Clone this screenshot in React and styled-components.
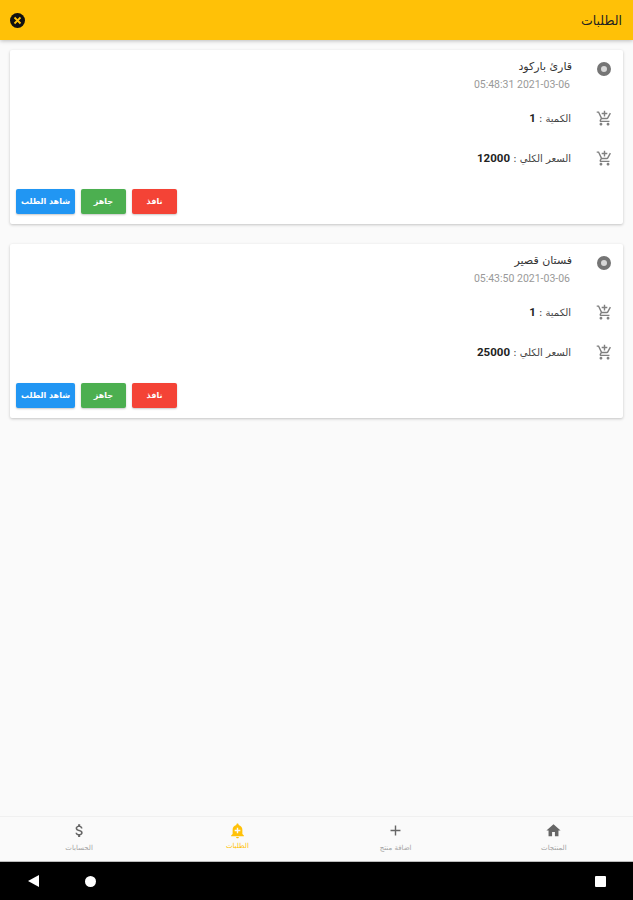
import React from "react";
import styled, { createGlobalStyle } from "styled-components";
import { MdHome, MdAdd, MdAttachMoney, MdAddAlert, MdOutlineAddShoppingCart } from "react-icons/md";

const Global = createGlobalStyle`
  html, body { margin: 0; padding: 0; background: #fafafa; }
  body { font-family: "DejaVu Sans", "Roboto", sans-serif; }
`;

const Screen = styled.div`
  width: 633px; height: 900px; display: flex; flex-direction: column; background: #fafafa; overflow: hidden;
`;
const AppBar = styled.header`
  height: 40px; flex: none; background: #ffc107; display: flex; align-items: center; justify-content: space-between;
  padding: 0 11px 0 10px; direction: rtl; box-shadow: 0 1px 4px rgba(0,0,0,.25); position: relative;
`;
const Title = styled.h1`
  margin: 0; font-size: 12.5px; font-weight: 400; color: #222;
`;
const CloseBadge = styled.span`
  width: 15px; height: 15px; border-radius: 50%; background: #111; display: flex; align-items: center; justify-content: center;
`;
const List = styled.main`
  flex: 1; padding: 10px 10px 0; display: flex; flex-direction: column; gap: 20px;
`;
const Card = styled.section`
  box-sizing: border-box; height: 174px; background: #fff; border-radius: 2px; box-shadow: 0 1px 3px rgba(0,0,0,.22);
  display: flex; flex-direction: column; direction: rtl; padding: 0 6px 10px;
`;
const Row = styled.div`
  display: flex; align-items: center; height: ${p => p.$h}px; padding-right: 4px; gap: 23px;
`;
const HeadRow = styled.div`
  display: flex; align-items: flex-start; height: 50px; box-sizing: border-box; padding: 9px 4px 0 0; gap: 23px;
`;
const IconSlot = styled.span`
  width: 18px; flex: none; display: flex; justify-content: center; color: #808080;
`;
const HeadIcon = styled(IconSlot)`
  margin-top: 3px;
`;
const Ring = styled.span`
  width: 14px; height: 14px; border-radius: 50%; background: #d8d8d8; border: 4px solid #757575; box-sizing: border-box;
`;
const Stack = styled.div`
  display: flex; flex-direction: column; gap: 5px; padding-top: 1px;
`;
const Name = styled.div`
  font-size: 11px; color: #333; line-height: 14px;
`;
const Stamp = styled.div`
  font-family: Roboto, sans-serif; font-size: 10.5px; color: #999; line-height: 12px; padding-right: 2px;
`;
const Detail = styled.div`
  font-size: 10px; color: #444; line-height: 14px; padding-right: 1px;
`;
const Value = styled.b`
  font-family: Roboto, sans-serif; font-size: 11.5px; font-weight: 700; color: #222;
`;
const Actions = styled.div`
  margin-top: auto; display: flex; gap: 6px; direction: ltr;
`;
const Action = styled.button`
  width: ${p => p.$w}px; height: 25px; border: 0; border-radius: 2px; padding: 0; background: ${p => p.$bg};
  color: #fff; font-family: "DejaVu Sans", sans-serif; font-size: 8px; font-weight: 700; box-shadow: 0 1px 2px rgba(0,0,0,.22); direction: rtl;
`;
const Nav = styled.nav`
  height: 44px; flex: none; display: grid; grid-template-columns: repeat(4, 1fr); background: #fafafa;
  border-top: 1px solid #f0f0f0; border-bottom: 1px solid #bbb;
`;
const NavItem = styled.div`
  display: flex; flex-direction: column; align-items: center; padding-top: 5px; gap: ${p => p.$active ? 3 : 5}px; color: ${p => p.$active ? "#ffc107" : "#666"};
`;
const NavLabel = styled.span`
  font-size: 7px; line-height: 9px; color: ${p => p.$active ? "#ffc107" : "#a3a3a3"}; direction: rtl;
`;
const SystemBar = styled.div`
  height: 38px; flex: none; background: #000; display: flex; align-items: center; justify-content: space-between; padding: 0 27px 0 28px;
`;
const SysGroup = styled.div`
  display: flex; align-items: center; gap: 45px;
`;
const Dot = styled.span`
  width: 11px; height: 11px; border-radius: 50%; background: #fff;
`;
const Square = styled.span`
  width: 11px; height: 11px; border-radius: 1px; background: #fff;
`;

const orders = [
  { name: "قارئ باركود", time: "2021-03-06 05:48:31", total: "12000" },
  { name: "فستان قصير", time: "2021-03-06 05:43:50", total: "25000" },
];
const nav = [
  { label: "الحسابات", Icon: MdAttachMoney },
  { label: "الطلبات", Icon: MdAddAlert, active: true },
  { label: "اضافة منتج", Icon: MdAdd },
  { label: "المنتجات", Icon: MdHome },
];

export default function App() {
  return (
    <Screen>
      <Global />
      <AppBar>
        <Title>الطلبات</Title>
        <CloseBadge>
          <svg width="9" height="9" viewBox="0 0 9 9"><path d="M1.5 1.5l6 6M7.5 1.5l-6 6" stroke="#ffc107" strokeWidth="1.8" /></svg>
        </CloseBadge>
      </AppBar>
      <List>
        {orders.map(o => (
          <Card key={o.name}>
            <HeadRow>
              <HeadIcon><Ring /></HeadIcon>
              <Stack><Name>{o.name}</Name><Stamp>{o.time}</Stamp></Stack>
            </HeadRow>
            <Row $h={36}>
              <IconSlot><MdOutlineAddShoppingCart size={17} /></IconSlot>
              <Detail>الكمية : <Value>1</Value></Detail>
            </Row>
            <Row $h={44}>
              <IconSlot><MdOutlineAddShoppingCart size={17} /></IconSlot>
              <Detail>السعر الكلي : <Value>{o.total}</Value></Detail>
            </Row>
            <Actions>
              <Action $w={59} $bg="#2196f3">شاهد الطلب</Action>
              <Action $w={45} $bg="#4caf50">جاهز</Action>
              <Action $w={45} $bg="#f44336">نافذ</Action>
            </Actions>
          </Card>
        ))}
      </List>
      <Nav>
        {nav.map(({ label, Icon, active }) => (
          <NavItem key={label} $active={active}>
            <Icon size={17} />
            <NavLabel $active={active}>{label}</NavLabel>
          </NavItem>
        ))}
      </Nav>
      <SystemBar>
        <SysGroup>
          <svg width="12" height="12" viewBox="0 0 12 12"><path d="M11 0v12L0 6z" fill="#fff" /></svg>
          <Dot />
        </SysGroup>
        <Square />
      </SystemBar>
    </Screen>
  );
}
